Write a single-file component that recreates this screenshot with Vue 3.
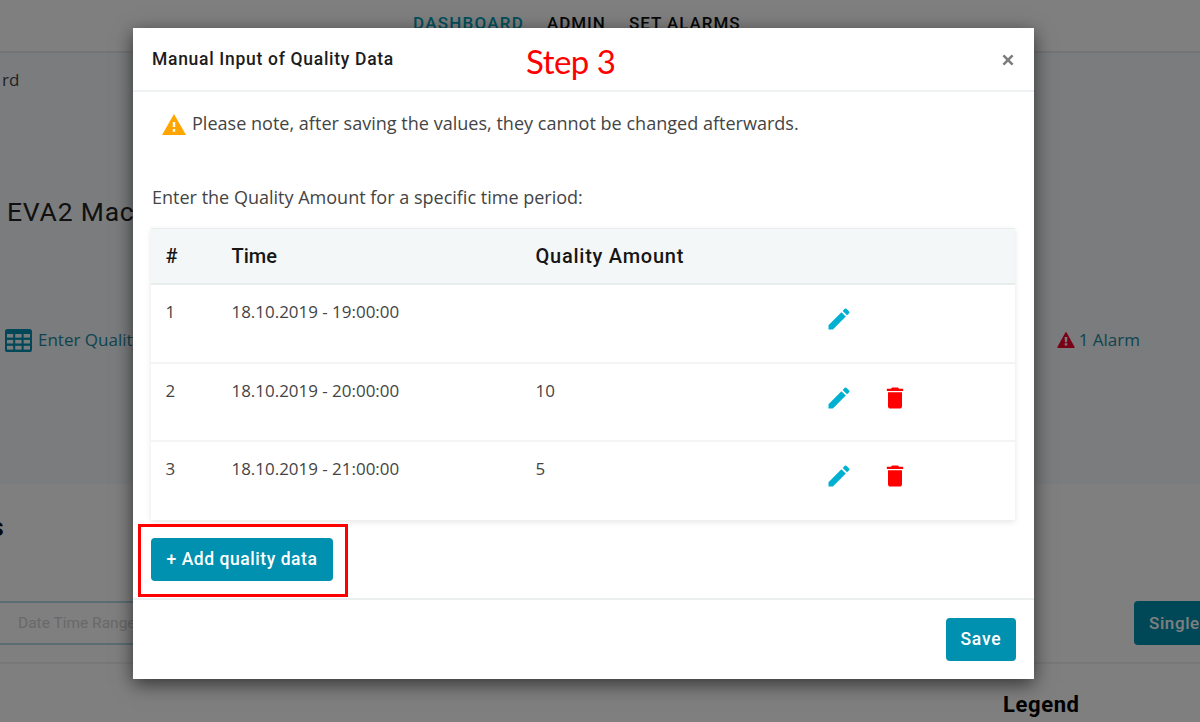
<script setup>
const rows = [
  { id: 1, time: '18.10.2019 - 19:00:00', amount: '', removable: false },
  { id: 2, time: '18.10.2019 - 20:00:00', amount: '10', removable: true },
  { id: 3, time: '18.10.2019 - 21:00:00', amount: '5', removable: true },
]
</script>

<template>
  <div class="page">
    <nav class="nav">
      <span class="nav-dash">DASHBOARD</span>
      <span class="nav-admin">ADMIN</span>
      <span class="nav-alarms">SET ALARMS</span>
    </nav>
    <section class="machine">
      <div class="crumb">rd</div>
      <h1 class="name">EVA2 Machine</h1>
      <div class="links">
        <span class="link">
          <svg class="grid-icon" viewBox="0 0 27 23">
            <rect x="0" y="0" width="27" height="23" rx="2.6" fill="#008fb0" />
            <g fill="#f5f7f8">
              <rect x="2" y="5" width="6.2" height="3.6" /><rect x="10.2" y="5" width="6.4" height="3.6" /><rect x="18.6" y="5" width="6.4" height="3.6" />
              <rect x="2" y="10.9" width="6.2" height="3.6" /><rect x="10.2" y="10.9" width="6.4" height="3.6" /><rect x="18.6" y="10.9" width="6.4" height="3.6" />
              <rect x="2" y="16.8" width="6.2" height="3.8" /><rect x="10.2" y="16.8" width="6.4" height="3.8" /><rect x="18.6" y="16.8" width="6.4" height="3.8" />
            </g>
          </svg>
          <span class="enter">Enter Quality</span>
        </span>
        <span class="link alarm">
          <svg class="alarm-icon" viewBox="0 0 18 16">
            <path d="M9 .8 17 15.3H1Z" fill="#f5002d" stroke="#f5002d" stroke-width="1.4" stroke-linejoin="round" />
            <path d="M7.6 5h2.8L10 10.2H8ZM7.7 11.2h2.6v2.4H7.7Z" fill="#f5f7f8" />
          </svg>
          <span class="alarm-text">1 Alarm</span>
        </span>
      </div>
    </section>
    <section class="lower">
      <h2 class="tail"><span>s</span></h2>
      <div class="filters">
        <div class="range"><span>Date Time Range</span></div>
        <div class="single"><span>Single</span></div>
      </div>
      <div class="legend"><span>Legend</span></div>
    </section>

    <div class="overlay">
      <div class="modal">
        <header class="modal-head">
          <span class="title">Manual Input of Quality Data</span>
          <svg class="close" viewBox="0 0 12 12"><path d="M1.4 1.4 10.6 10.6M10.6 1.4 1.4 10.6" stroke="#7c7c7c" stroke-width="2.5" /></svg>
        </header>
        <div class="body">
          <p class="note">
            <svg class="warn" viewBox="0 0 24 21"><path d="M12 0 24 21H0Z" fill="#ffa500" /><path d="M10.8 8h2.4v5h-2.4ZM10.8 15h2.4v2.7h-2.4Z" fill="#fff" /></svg>
            <span class="note-text">Please note, after saving the values, they cannot be changed afterwards.</span>
          </p>
          <p class="prompt"><span>Enter the Quality Amount for a specific time period:</span></p>
          <div class="table">
            <div class="row head">
              <span>#</span><span class="h-time">Time</span><span class="h-amount">Quality Amount</span>
            </div>
            <div v-for="r in rows" :key="r.id" class="row">
              <span>{{ r.id }}</span><span>{{ r.time }}</span><span>{{ r.amount }}</span>
              <span class="act">
                <svg viewBox="0 0 24 24"><path fill="#00b0d0" d="M3 17.25V21h3.75L17.81 9.94l-3.75-3.75L3 17.25zM20.71 7.04a1 1 0 0 0 0-1.41l-2.34-2.34a1 1 0 0 0-1.41 0l-1.83 1.83 3.75 3.75 1.83-1.83z" /></svg>
              </span>
              <span class="act">
                <svg v-if="r.removable" viewBox="0 0 24 24"><path fill="#f00" d="M6 19c0 1.1.9 2 2 2h8c1.1 0 2-.9 2-2V7H6v12zM19 4h-3.5l-1-1h-5l-1 1H5v2h14V4z" /></svg>
              </span>
            </div>
          </div>
          <button class="btn add"><span>+ Add quality data</span></button>
        </div>
        <footer class="foot"><button class="btn save"><span>Save</span></button></footer>
      </div>
      <div class="step">Step 3</div>
      <div class="marker"></div>
    </div>
  </div>
</template>

<style>
body { margin: 0; overflow: hidden; }
</style>

<style scoped>
* { box-sizing: border-box; }
.page { position: relative; width: 1200px; height: 722px; overflow: hidden; background: #fff; font-family: "Open Sans", sans-serif; color: #444; white-space: nowrap; }
.nav { display: flex; height: 53px; padding: 11px 0 0 413px; border-bottom: 2px solid #e6eaea; font: 500 17px/24px Roboto, sans-serif; color: #111; }
.nav-dash { width: 134px; color: #00a0b8; letter-spacing: 1.25px; }
.nav-admin { width: 82px; letter-spacing: .95px; }
.nav-alarms { letter-spacing: .95px; }
.machine { height: 431px; background: #f6f8fa; padding-top: 15px; }
.crumb { padding-left: 2px; height: 24px; font-size: 17px; line-height: 24px; }
.name { margin: 102px 0 0 7px; height: 36px; font: 400 26.5px/36px Roboto, sans-serif; letter-spacing: .8px; color: #222; }
.links { display: flex; align-items: center; justify-content: space-between; height: 24px; margin-top: 98px; padding: 0 60px 0 5px; color: #1d89a3; font-size: 17px; line-height: 24px; }
.link { display: flex; align-items: center; }
.grid-icon { width: 27px; height: 23px; margin-right: 6px; }
.alarm-icon { width: 18px; height: 16px; margin-right: 4px; }
.lower { height: 238px; padding-top: 26px; background: #fff; }
.tail { display: flex; justify-content: flex-end; width: 4px; margin: 0; height: 34px; font: 500 26px/34px Roboto, sans-serif; color: #111; }
.filters { display: flex; justify-content: space-between; height: 120px; padding-top: 57px; border-bottom: 2px solid #eff1f1; }
.range { width: 600px; height: 44px; border: 1px solid #b6dbe2; border-width: 2px 0; padding-left: 18px; font: 400 15.5px/41px Roboto, sans-serif; color: #d2d2d2; }
.single { width: 66px; height: 44px; border-radius: 4px 0 0 4px; background: #0090b0; padding-left: 15px; font: 500 17px/44px Roboto, sans-serif; color: #fff; letter-spacing: .6px; }
.legend { padding: 25px 0 0 1003px; font: 700 22px/32px Roboto, sans-serif; color: #000; letter-spacing: .6px; }

.overlay { position: absolute; inset: 0; background: rgba(0, 0, 0, .5); }
.modal { display: flex; flex-direction: column; width: 901px; height: 651px; margin: 28px 0 0 133px; background: #fff; box-shadow: 0 5px 18px rgba(0, 0, 0, .6); }
.modal-head { display: flex; align-items: center; justify-content: space-between; height: 64px; padding: 0 20px 0 19px; border-bottom: 2px solid #eff2f3; font: 500 17.5px/24px Roboto, sans-serif; letter-spacing: .7px; color: #1c1c1c; }
.close { width: 12px; height: 12px; margin-top: 2px; }
.body { flex: 1; padding: 18px 18px 0; }
.note { display: flex; align-items: center; height: 26px; margin: 0 0 48px; padding-left: 11px; font-size: 18.06px; line-height: 26px; }
.warn { width: 24px; height: 21px; margin: 3px 6px 0 0; }
.prompt { height: 26px; margin: 0; font-size: 18.03px; line-height: 26px; padding-left: 1px; }
.table { height: 292px; margin-top: 18px; width: 864px; box-shadow: 0 2px 6px rgba(0, 0, 0, .1); }
.row { display: grid; grid-template-columns: 66px 304px 289px 56px 1fr; height: 78.5px; padding: 15px 0 0 14.5px; border-top: 2px solid #f3f4f4; font-size: 16.96px; line-height: 24px; }
.row:nth-child(2) { border-top-color: #e7eded; }
.row.head { height: 55px; padding-top: 14px; background: #f4f7f8; border-top: 1px solid #e9edee; font: 500 20px/26px Roboto, sans-serif; color: #161616; }
.h-amount { letter-spacing: .75px; }
.act { padding-top: 5px; height: 36px; }
.act svg { display: block; width: 28px; height: 28px; }
.btn { display: block; border: 0; height: 43px; border-radius: 4px; background: #0090b0; color: #fff; padding: 0; text-align: center; font: 500 17.5px/43px Roboto, sans-serif; letter-spacing: .55px; }
.add { width: 182px; margin-top: 18px; }
.foot { display: flex; justify-content: flex-end; height: 81px; border-top: 2px solid #eceff0; padding: 18px 18px 0; }
.save { width: 70px; letter-spacing: .8px; }
.step { position: absolute; left: 526px; top: 40px; font: 400 33px/42px Lato, Carlito, sans-serif; letter-spacing: -.5px; color: #f00; }
.marker { position: absolute; left: 138px; top: 524px; width: 210px; height: 73px; border: 3px solid #f00; }
</style>
